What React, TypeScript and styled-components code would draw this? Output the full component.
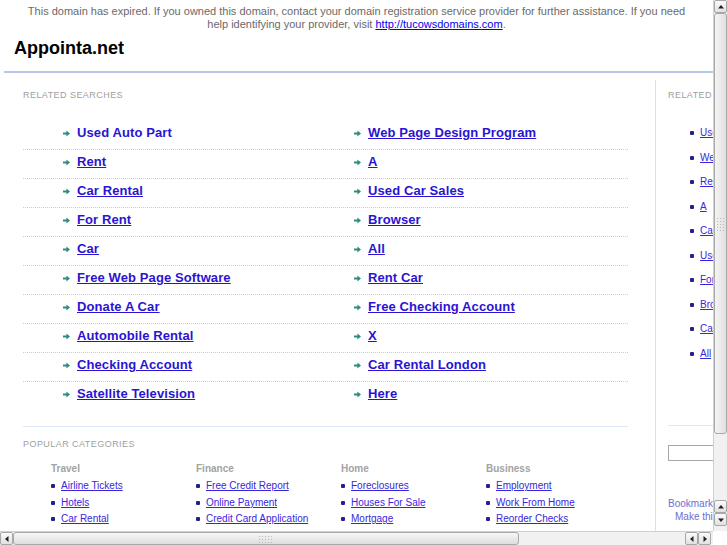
import React from "react";
import styled, { createGlobalStyle } from "styled-components";

const Global = createGlobalStyle`
  html, body { margin: 0; padding: 0; overflow: hidden; background: #fff; }
  body { font-family: "Liberation Sans", Arial, sans-serif; }
`;

const Frame = styled.div`
  width: 727px;
  height: 545px;
  display: grid;
  grid-template-columns: 713px 14px;
  grid-template-rows: 531px 14px;
  background: #fff;
`;

const Viewport = styled.div`
  overflow: hidden;
  position: relative;
`;

const PageInner = styled.div`
  width: 820px;
`;

const Notice = styled.div`
  width: 673px;
  padding: 5px 20px 0 20px;
  text-align: center;
  font-size: 11px;
  line-height: 13px;
  color: #6a6a6a;
  a { color: #0000ee; text-decoration: underline; }
`;

const Title = styled.h1`
  margin: 6px 0 0 14px;
  font-size: 18px;
  line-height: 22px;
  font-weight: bold;
  color: #000;
`;

const Rule = styled.div`
  margin: 12px 0 0 4px;
  height: 2px;
  background: #b3c7e6;
`;

const Body = styled.div`
  display: grid;
  grid-template-columns: 651px 1fr;
  margin: 7px 0 0 4px;
`;

const Main = styled.div`
  padding: 10px 0 0 19px;
  width: 605px;
`;

const SectionLabel = styled.div`
  font-size: 9px;
  line-height: 11px;
  letter-spacing: 0.45px;
  color: #a0a0a0;
  text-transform: uppercase;
`;

const LinkList = styled.div`
  margin-top: 20px;
`;

const LinkRow = styled.div<{ $last?: boolean }>`
  display: grid;
  grid-template-columns: 291px 1fr;
  padding: 4px 0 8px 40px;
  border-bottom: ${(p) => (p.$last ? "1px solid transparent" : "1px dotted #bcd0ee")};
`;

const LinkCell = styled.div`
  display: flex;
  align-items: center;
  gap: 7px;
  line-height: 16px;
`;

const BigLink = styled.a<{ $plain?: boolean }>`
  font-size: 13px;
  font-weight: bold;
  color: #2a14d2;
  text-decoration: ${(p) => (p.$plain ? "none" : "underline")};
  letter-spacing: 0.1px;
`;

const Divider = styled.div`
  margin-top: 15px;
  height: 1px;
  background: #dde7f5;
`;

const PopularLabel = styled(SectionLabel)`
  margin-top: 12px;
`;

const Categories = styled.div`
  display: grid;
  grid-template-columns: repeat(4, 145px);
  padding-left: 28px;
  margin-top: 13px;
`;

const CatHead = styled.div`
  font-size: 10px;
  line-height: 12px;
  font-weight: bold;
  color: #a3a3a3;
  margin-bottom: 3px;
`;

const SmallItem = styled.div<{ $lh?: number }>`
  display: flex;
  align-items: center;
  gap: 6px;
  font-size: 10px;
  line-height: ${(p) => p.$lh ?? 16.5}px;
  white-space: nowrap;
`;

const Bullet = styled.span`
  width: 4px;
  height: 4px;
  border-radius: 1px;
  background: #24208e;
  flex: none;
`;

const SmallLink = styled.a`
  color: #3826dc;
  text-decoration: underline;
`;

const Side = styled.div`
  border-left: 1px solid #d6e1f2;
  padding: 10px 0 0 12px;
  min-height: 460px;
`;

const SideList = styled.div`
  margin-top: 20px;
  padding-left: 22px;
`;

const SideDivider = styled.div`
  margin-top: 59px;
  height: 1px;
  width: 120px;
  background: #dde7f5;
`;

const SearchBox = styled.input`
  margin-top: 19px;
  width: 110px;
  height: 16px;
  border: 1px solid #a8a8a8;
  padding: 0;
  box-sizing: border-box;
  display: block;
`;

const Bookmark = styled.div<{ $indent?: number }>`
  font-size: 10px;
  line-height: 12.5px;
  color: #6e6ecf;
  padding-left: ${(p) => p.$indent ?? 0}px;
  white-space: nowrap;
`;

const BookmarkWrap = styled.div`
  margin-top: 37px;
`;

/* scrollbars */
const VBar = styled.div`
  display: flex;
  flex-direction: column;
  background: #f1f1f1;
  border-left: 1px solid #d0d0d0;
  box-sizing: border-box;
  padding-bottom: 5px;
`;

const HBar = styled.div`
  display: flex;
  background: #f1f1f1;
  border-top: 1px solid #d0d0d0;
  box-sizing: border-box;
  padding-right: 2px;
`;

const Corner = styled.div`
  background: #fff;
`;

const Btn = styled.div`
  flex: none;
  width: 13px;
  height: 13px;
  box-sizing: border-box;
  border: 1px solid #a7a7a7;
  border-radius: 2px;
  background: linear-gradient(#fbfbfb, #e1e1e1);
  display: flex;
  align-items: center;
  justify-content: center;
`;

const Track = styled.div<{ $dir: "v" | "h" }>`
  flex: 1;
  display: flex;
  flex-direction: ${(p) => (p.$dir === "v" ? "column" : "row")};
  background-image: radial-gradient(#e2e2e2 0.6px, transparent 0.7px);
  background-size: 2px 2px;
`;

const Thumb = styled.div<{ $dir: "v" | "h"; $len: number }>`
  flex: none;
  ${(p) => (p.$dir === "v" ? `height: ${p.$len}px; width: 13px;` : `width: ${p.$len}px; height: 13px;`)}
  box-sizing: border-box;
  border: 1px solid #a9a9a9;
  border-radius: 3px;
  background: ${(p) =>
    p.$dir === "v"
      ? "linear-gradient(90deg, #f4f4f4, #e0e0e0)"
      : "linear-gradient(#f6f6f6, #dedede)"};
  display: flex;
  align-items: center;
  justify-content: center;
`;

const Grip = styled.div<{ $dir: "v" | "h" }>`
  ${(p) => (p.$dir === "v" ? "width: 9px; height: 14px;" : "width: 16px; height: 8px;")}
  background-image: radial-gradient(#b9b9b9 0.7px, transparent 0.8px);
  background-size: 3px 3px;
`;

const Arrow = ({ dir }: { dir: "up" | "down" | "left" | "right" }) => {
  const pts: Record<string, string> = {
    up: "1,5.5 4,2 7,5.5",
    down: "1,2.5 4,6 7,2.5",
    left: "5.5,1 2,4 5.5,7",
    right: "2.5,1 6,4 2.5,7",
  };
  return (
    <svg width="8" height="8" viewBox="0 0 8 8">
      <polygon points={pts[dir]} fill="#222" />
    </svg>
  );
};

const TealArrow = () => (
  <svg width="7" height="7" viewBox="0 0 7 7" style={{ flex: "none" }}>
    <path d="M0 2.6h3.4V0.6L7 3.5 3.4 6.4V4.4H0z" fill="#2f8a80" />
  </svg>
);

const rows: [string, string][] = [
  ["Used Auto Part", "Web Page Design Program"],
  ["Rent", "A"],
  ["Car Rental", "Used Car Sales"],
  ["For Rent", "Browser"],
  ["Car", "All"],
  ["Free Web Page Software", "Rent Car"],
  ["Donate A Car", "Free Checking Account"],
  ["Automobile Rental", "X"],
  ["Checking Account", "Car Rental London"],
  ["Satellite Television", "Here"],
];

const categories: { title: string; links: string[] }[] = [
  { title: "Travel", links: ["Airline Tickets", "Hotels", "Car Rental"] },
  { title: "Finance", links: ["Free Credit Report", "Online Payment", "Credit Card Application"] },
  { title: "Home", links: ["Foreclosures", "Houses For Sale", "Mortgage"] },
  { title: "Business", links: ["Employment", "Work From Home", "Reorder Checks"] },
];

const sideLinks = [
  "Used Auto Part",
  "Web Page Design Program",
  "Rent",
  "A",
  "Car Rental",
  "Used Car Sales",
  "For Rent",
  "Browser",
  "Car",
  "All",
];

export default function App() {
  return (
    <>
      <Global />
      <Frame>
        <Viewport>
          <PageInner>
            <Notice>
              This domain has expired. If you owned this domain, contact your domain registration
              service provider for further assistance. If you need help identifying your provider,
              visit <a href="#">http://tucowsdomains.com</a>.
            </Notice>
            <Title>Appointa.net</Title>
            <Rule />
            <Body>
              <Main>
                <SectionLabel>Related Searches</SectionLabel>
                <LinkList>
                  {rows.map(([a, b], i) => (
                    <LinkRow key={i} $last={i === rows.length - 1}>
                      <LinkCell>
                        <TealArrow />
                        <BigLink href="#" $plain={i === 0}>{a}</BigLink>
                      </LinkCell>
                      <LinkCell>
                        <TealArrow />
                        <BigLink href="#">{b}</BigLink>
                      </LinkCell>
                    </LinkRow>
                  ))}
                </LinkList>
                <Divider />
                <PopularLabel>Popular Categories</PopularLabel>
                <Categories>
                  {categories.map((c) => (
                    <div key={c.title}>
                      <CatHead>{c.title}</CatHead>
                      {c.links.map((l) => (
                        <SmallItem key={l}>
                          <Bullet />
                          <SmallLink href="#">{l}</SmallLink>
                        </SmallItem>
                      ))}
                    </div>
                  ))}
                </Categories>
              </Main>
              <Side>
                <SectionLabel>Related Searches</SectionLabel>
                <SideList>
                  {sideLinks.map((l) => (
                    <SmallItem key={l} $lh={24.5}>
                      <Bullet />
                      <SmallLink href="#">{l}</SmallLink>
                    </SmallItem>
                  ))}
                </SideList>
                <SideDivider />
                <SearchBox />
                <BookmarkWrap>
                  <Bookmark>Bookmark this page</Bookmark>
                  <Bookmark $indent={7}>Make this your homepage</Bookmark>
                </BookmarkWrap>
              </Side>
            </Body>
          </PageInner>
        </Viewport>
        <VBar>
          <Btn><Arrow dir="up" /></Btn>
          <Track $dir="v">
            <Thumb $dir="v" $len={421}><Grip $dir="v" /></Thumb>
          </Track>
          <Btn><Arrow dir="up" /></Btn>
          <Btn><Arrow dir="down" /></Btn>
        </VBar>
        <HBar>
          <Btn><Arrow dir="left" /></Btn>
          <Track $dir="h">
            <Thumb $dir="h" $len={506}><Grip $dir="h" /></Thumb>
          </Track>
          <Btn><Arrow dir="left" /></Btn>
          <Btn><Arrow dir="right" /></Btn>
        </HBar>
        <Corner />
      </Frame>
    </>
  );
}
